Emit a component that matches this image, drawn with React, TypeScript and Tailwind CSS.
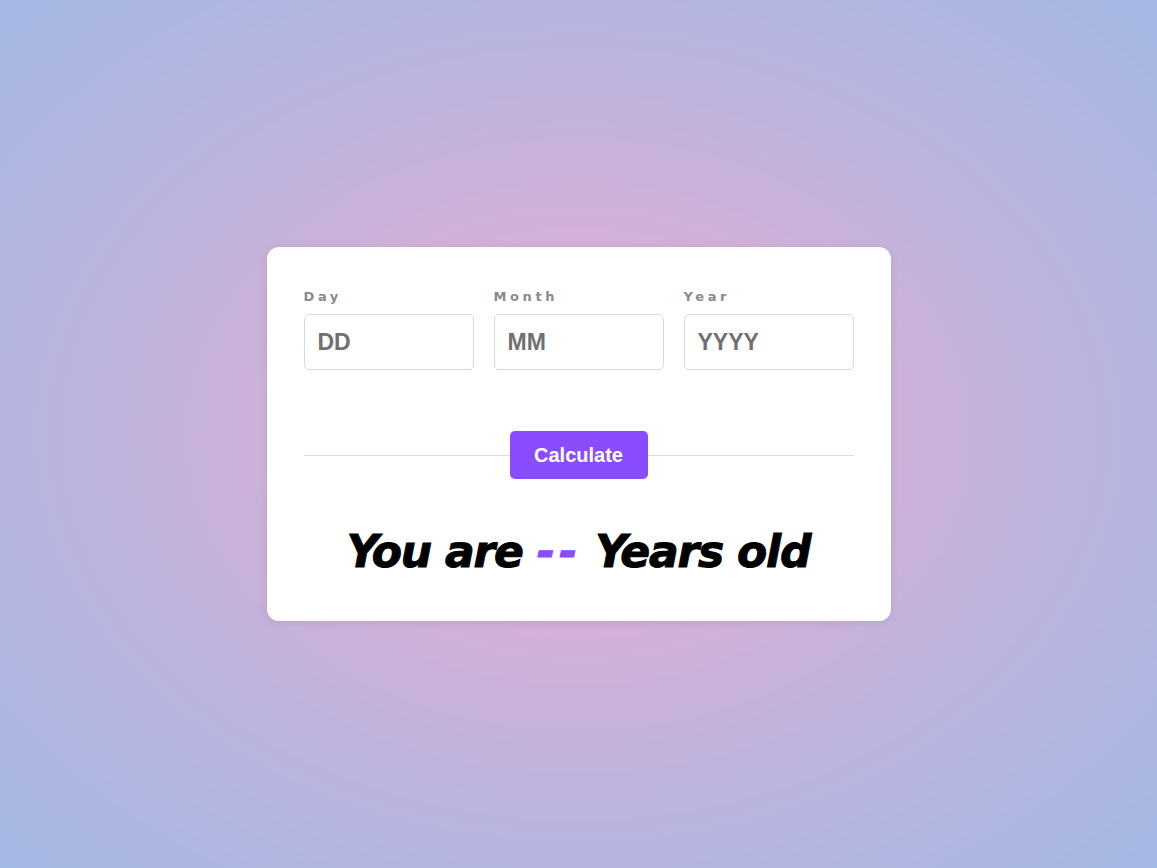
export default function App() {
  const fields = [
    { label: 'Day', placeholder: 'DD' },
    { label: 'Month', placeholder: 'MM' },
    { label: 'Year', placeholder: 'YYYY' },
  ]

  return (
    <div className="min-h-[868px] w-full flex items-center justify-center bg-[radial-gradient(ellipse_at_center,#dcacd4_0%,#d2b0d8_33%,#bab4de_62%,#a3b8e3_100%)]">
      <div className="w-[624px] h-[374px] bg-white rounded-xl shadow-[0_2px_10px_rgba(0,0,0,0.08)] px-[37px] pt-[40px]">
        <div className="grid grid-cols-3 gap-[20px]">
          {fields.map((f) => (
            <div key={f.label} className="flex flex-col">
              <label className="font-['DejaVu_Sans',sans-serif] font-bold text-[13px] tracking-[3.6px] text-[#8a8a8a] leading-[20px] mb-[7px]">
                {f.label}
              </label>
              <input
                type="text"
                placeholder={f.placeholder}
                className="h-[56px] w-full border border-[#dadada] rounded-[5px] px-[13px] font-['Liberation_Sans',sans-serif] font-bold text-[23px] placeholder:text-[#707070] text-[#333] outline-none"
              />
            </div>
          ))}
        </div>

        <div className="relative mt-[61px] h-[48px] flex items-center justify-center">
          <div className="absolute left-0 right-0 top-[24px] h-px bg-[#dcdcdc]" />
          <button className="relative w-[138px] h-[48px] bg-[#8a4cff] rounded-[5px] text-white font-['Liberation_Sans',sans-serif] font-bold text-[20px]">
            Calculate
          </button>
        </div>

        <h1 className="mt-[45px] text-center font-['DejaVu_Sans',sans-serif] font-bold italic text-[44px] leading-[56px] text-black tracking-[-1.2px] [-webkit-text-stroke:1px_currentColor]">
          You are <span className="text-[#8a4cff] tracking-[4px]">--</span>{' '}
          Years old
        </h1>
      </div>
    </div>
  )
}
